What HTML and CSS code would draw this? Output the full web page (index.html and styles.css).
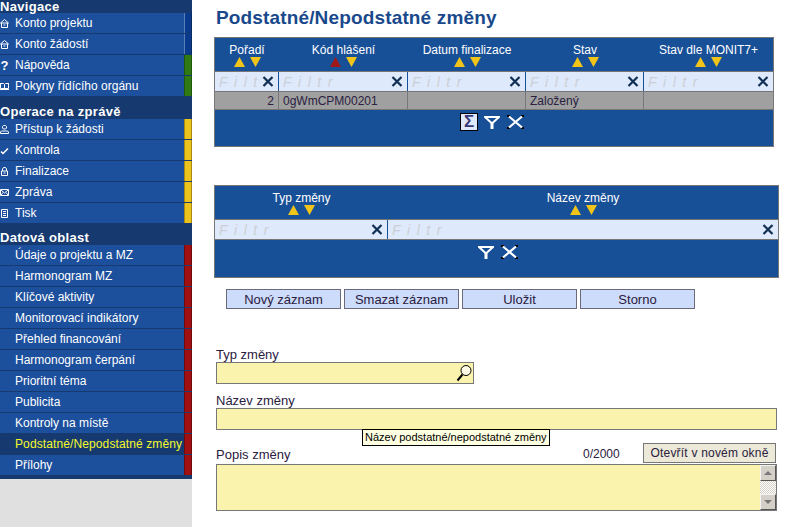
FILE: index.html
```html
<!DOCTYPE html>
<html lang="cs">
<head>
<meta charset="UTF-8">
<title>Podstatné/Nepodstatné změny</title>
<link rel="stylesheet" href="styles.css">
</head>
<body>
<svg class="defs" width="0" height="0">
  <defs>
    <symbol id="i-x" viewBox="0 0 11 11"><path d="M1 1l9 9M10 1l-9 9" fill="none" stroke="currentColor" stroke-width="2.2"/></symbol>
    <symbol id="i-close" viewBox="0 0 17 14" preserveAspectRatio="none"><path d="M0 0h3v2H0zM14 0h3v2h-3zM0 12h3v2H0zM14 12h3v2h-3z" fill="#000"/><path d="M2 1.500l13 11M15 1.500l-13 11" fill="none" stroke="#fff" stroke-width="2.200"/></symbol>
    <symbol id="i-up" viewBox="0 0 11 10"><path d="M5.5 0L11 10H0z" fill="currentColor"/></symbol>
    <symbol id="i-down" viewBox="0 0 11 10"><path d="M0 0H11L5.5 10z" fill="currentColor"/></symbol>
    <symbol id="i-funnel" viewBox="0 0 16 13"><path d="M1 1h14L8 7.500z" fill="none" stroke="#fff" stroke-width="2"/><path d="M6.500 7h3v6h-3z" fill="#fff"/></symbol>
    <symbol id="i-home" viewBox="0 0 9 9"><path d="M4.5 .5L8.5 4H.5zM1.5 4v4.500h6V4M3.5 6h2" fill="none" stroke="#fff"/></symbol>
  </defs>
</svg>
<div class="page">
  <nav class="side">
    <div class="side-nav">
      <h3 class="side-head">Navigace</h3>
      <a class="side-item"><svg class="ico"><use href="#i-home"/></svg>Konto projektu<i class="mark blue"></i></a>
      <a class="side-item"><svg class="ico"><use href="#i-home"/></svg>Konto žádostí<i class="mark blue"></i></a>
      <a class="side-item"><span class="ico ico-q">?</span>Nápověda<i class="mark green"></i></a>
      <a class="side-item"><svg class="ico" viewBox="0 0 9 9"><path d="M0 1.500h3.500l1 1 1-1H9M.5 1.500v5h8v-5M4.500 2.500v4M0 7.500h9" fill="none" stroke="#fff"/></svg>Pokyny řídícího orgánu<i class="mark green"></i></a>
      <h3 class="side-head tall">Operace na zprávě</h3>
      <a class="side-item"><svg class="ico" viewBox="0 0 9 9"><path d="M2.500 3V1.500l1-1h2l1 1V3l-1 1h-2zM.5 8.500V7l1-1h6l1 1v1.500z" fill="none" stroke="#fff"/></svg>Přístup k žádosti<i class="mark yellow"></i></a>
      <a class="side-item"><svg class="ico" viewBox="0 0 9 9"><path d="M1 5.500l2 2 5-5" fill="none" stroke="#fff" stroke-width="1.500"/></svg>Kontrola<i class="mark yellow"></i></a>
      <a class="side-item"><svg class="ico" viewBox="0 0 9 9"><path d="M2.500 4V2l1-1.500h2l1 1.500v2M1.500 4h6v4.500h-6zM3.500 6h2" fill="none" stroke="#fff"/></svg>Finalizace<i class="mark yellow"></i></a>
      <a class="side-item"><svg class="ico" viewBox="0 0 9 9"><path d="M.5 1.500h8v6h-8zM1 2l3.500 3L8 2M1 7l2-2.500M8 7L6 4.500" fill="none" stroke="#fff"/></svg>Zpráva<i class="mark yellow"></i></a>
      <a class="side-item"><svg class="ico" viewBox="0 0 9 9"><path d="M1.500 .5h6v8h-6zM3 2.500h3M3 4.500h3M3 6.500h3" fill="none" stroke="#fff"/></svg>Tisk<i class="mark yellow"></i></a>
      <h3 class="side-head">Datová oblast</h3>
      <a class="side-item"><span class="ico"></span>Údaje o projektu a MZ<i class="mark red"></i></a>
      <a class="side-item"><span class="ico"></span>Harmonogram MZ<i class="mark red"></i></a>
      <a class="side-item"><span class="ico"></span>Klíčové aktivity<i class="mark red"></i></a>
      <a class="side-item"><span class="ico"></span>Monitorovací indikátory<i class="mark red"></i></a>
      <a class="side-item"><span class="ico"></span>Přehled financování<i class="mark red"></i></a>
      <a class="side-item"><span class="ico"></span>Harmonogram čerpání<i class="mark red"></i></a>
      <a class="side-item"><span class="ico"></span>Prioritní téma<i class="mark red"></i></a>
      <a class="side-item"><span class="ico"></span>Publicita<i class="mark red"></i></a>
      <a class="side-item"><span class="ico"></span>Kontroly na místě<i class="mark red"></i></a>
      <a class="side-item active"><span class="ico"></span>Podstatné/Nepodstatné změny<i class="mark red"></i></a>
      <a class="side-item"><span class="ico"></span>Přílohy<i class="mark red"></i></a>
    </div>
  </nav>

  <main class="main">
    <h1 class="title">Podstatné/Nepodstatné změny</h1>

    <div class="grid grid-one">
      <div class="row row-head">
        <div class="hcell">Pořadí<div class="sort"><svg><use href="#i-up"/></svg><svg><use href="#i-down"/></svg></div></div>
        <div class="hcell">Kód hlášení<div class="sort"><svg class="sort-on"><use href="#i-up"/></svg><svg><use href="#i-down"/></svg></div></div>
        <div class="hcell">Datum finalizace<div class="sort"><svg><use href="#i-up"/></svg><svg><use href="#i-down"/></svg></div></div>
        <div class="hcell">Stav<div class="sort"><svg><use href="#i-up"/></svg><svg><use href="#i-down"/></svg></div></div>
        <div class="hcell">Stav dle MONIT7+<div class="sort"><svg><use href="#i-up"/></svg><svg><use href="#i-down"/></svg></div></div>
      </div>
      <div class="row row-filter">
        <div class="fcell"><span class="ph">Filtr</span><svg class="fx"><use href="#i-x"/></svg></div>
        <div class="fcell"><span class="ph">Filtr</span><svg class="fx"><use href="#i-x"/></svg></div>
        <div class="fcell"><span class="ph">Filtr</span><svg class="fx"><use href="#i-x"/></svg></div>
        <div class="fcell"><span class="ph">Filtr</span><svg class="fx"><use href="#i-x"/></svg></div>
        <div class="fcell"><span class="ph">Filtr</span><svg class="fx"><use href="#i-x"/></svg></div>
      </div>
      <div class="row row-data">
        <div class="dcell num">2</div>
        <div class="dcell">0gWmCPM00201</div>
        <div class="dcell"></div>
        <div class="dcell">Založený</div>
        <div class="dcell"></div>
      </div>
      <div class="grid-foot">
        <span class="sigma">Σ</span>
        <svg class="tool"><use href="#i-funnel"/></svg>
        <svg class="tool-x"><use href="#i-close"/></svg>
      </div>
    </div>

    <div class="grid grid-two">
      <div class="row row-head">
        <div class="hcell">Typ změny<div class="sort"><svg><use href="#i-up"/></svg><svg><use href="#i-down"/></svg></div></div>
        <div class="hcell">Název změny<div class="sort"><svg><use href="#i-up"/></svg><svg><use href="#i-down"/></svg></div></div>
      </div>
      <div class="row row-filter">
        <div class="fcell"><span class="ph">Filtr</span><svg class="fx"><use href="#i-x"/></svg></div>
        <div class="fcell"><span class="ph">Filtr</span><svg class="fx"><use href="#i-x"/></svg></div>
      </div>
      <div class="grid-foot">
        <svg class="tool"><use href="#i-funnel"/></svg>
        <svg class="tool-x"><use href="#i-close"/></svg>
      </div>
    </div>

    <div class="actions">
      <button class="btn">Nový záznam</button>
      <button class="btn">Smazat záznam</button>
      <button class="btn">Uložit</button>
      <button class="btn">Storno</button>
    </div>

    <form class="form">
      <label class="lbl">Typ změny</label>
      <div class="field field-short">
        <svg class="lens" viewBox="0 0 16 18"><circle cx="10" cy="6.500" r="5" fill="#fdfbe6" stroke="#000"/><path d="M6.500 10.500L1.500 16.500" stroke="#000" stroke-width="2"/></svg>
      </div>
      <label class="lbl lbl-gap">Název změny</label>
      <div class="field field-wide">
        <div class="tip">Název podstatné/nepodstatné změny</div>
      </div>
      <div class="popis-row">
        <label class="lbl">Popis změny</label>
        <span class="count">0/2000</span>
        <button type="button" class="btn-open">Otevřít v novém okně</button>
      </div>
      <div class="area">
        <div class="scroll">
          <span class="sbtn"><i class="arr arr-up"></i></span>
          <span class="strack"></span>
          <span class="sbtn"><i class="arr arr-down"></i></span>
        </div>
      </div>
    </form>
  </main>
</div>
</body>
</html>
```
FILE: styles.css
```css
html, body {
    margin: 0;
    padding: 0;
    background: white;
}

body {
    font-family: "Liberation Sans", Arial, sans-serif;
    font-size: 12px;
    color: #2a2040;
    height: 527px;
    overflow: hidden;
}

.defs {
    display: block;
    height: 0;
}

.page {
    display: flex;
    height: 527px;
}

/* left menu */
.side {
    width: 192px;
    flex: none;
    background: #e0e0e0;
}

.side-nav {
    background: #163a70;
    padding-bottom: 3px;
}

.side-head {
    margin: 0;
    height: 13px;
    line-height: 14px;
    font-size: 13px;
    letter-spacing: .3px;
    font-weight: bold;
    color: white;
}

.side-head.tall {
    height: 22px;
    line-height: 29px;
}

.side-item + .side-head:not(.tall) {
    height: 21px;
    line-height: 28px;
}

.side-item {
    display: flex;
    align-items: center;
    box-sizing: border-box;
    height: 21px;
    border-bottom: 1px solid #163a70;
    background: #1c4f9c;
    color: white;
    white-space: nowrap;
}

.side-item.active {
    background: #163a70;
    color: #f4f82a;
    letter-spacing: .11px;
}

.mark {
    margin-left: auto;
    flex: none;
    align-self: stretch;
    box-sizing: border-box;
    width: 8px;
    border-left: 1px solid;
    border-right: 1px solid;
}

.mark.blue { background: #0a3a8c; border-color: #5a7fb8 #0a2a60 #0a2a60 #5a7fb8; }
.mark.green { background: #2f7a12; border-color: #6a9a50 #1f5a0c; }
.mark.yellow { background: #ecc21c; border-color: #c8b868 #a88a10; }
.mark.red { background: #a01010; border-color: #c06868 #700a0a; }

.ico {
    width: 9px;
    height: 9px;
    flex: none;
    margin-right: 6px;
    display: block;
}

.ico-q {
    font-weight: bold;
    font-size: 13px;
    line-height: 9px;
    text-align: center;
}

/* main column */
.main {
    flex: 1;
    min-width: 0;
    padding: 0 0 0 22px;
}

.title {
    margin: 0 0 0 2px;
    height: 37px;
    line-height: 35px;
    font-size: 19px;
    font-weight: bold;
    letter-spacing: .15px;
    color: #19498c;
}

.grid {
    box-sizing: border-box;
    border: 1px solid #777;
    background: #185098;
}

.grid-one {
    width: 560px;
    height: 110px;
}

.grid-two {
    width: 565px;
    height: 93px;
    margin-top: 38px;
}

.row {
    display: grid;
}

.grid-one .row {
    grid-template-columns: 64px 129px 118px 118px 129px;
}

.grid-two .row {
    grid-template-columns: 173px 390px;
}

.row-head {
    height: 33px;
}

.hcell {
    text-align: center;
    color: white;
    padding-top: 6px;
    line-height: 13px;
}

.sort {
    display: flex;
    justify-content: center;
    gap: 5px;
    height: 10px;
}

.sort svg {
    width: 11px;
    height: 10px;
    color: #f0c419;
}

.sort svg.sort-on {
    color: #a01818;
}

.row-filter {
    height: 21px;
    box-sizing: border-box;
    background: #dfe9fc;
    border-top: 1px solid #777;
    border-bottom: 1px solid #777;
}

.fcell {
    display: flex;
    align-items: center;
    overflow: hidden;
    border-right: 1px solid #185098;
    padding: 0 4px;
    position: relative;
}

.fcell:last-child {
    border-right: 0;
}

.ph {
    font-style: italic;
    font-size: 14px;
    letter-spacing: 6.500px;
    color: #ccd0d6;
}

.fx {
    width: 12px;
    height: 11px;
    flex: none;
    color: #0f2f55;
    position: absolute;
    right: 4px;
    top: 4px;
}

.row-data {
    height: 18px;
    background: #a0a0a0;
    border-bottom: 1px solid #777;
    box-sizing: border-box;
}

.dcell {
    padding: 0 4px;
    line-height: 18px;
    border-right: 1px solid #777;
}

.dcell:last-child {
    border-right: 0;
}

.dcell.num {
    text-align: right;
}

.grid-foot {
    display: flex;
    justify-content: center;
    align-items: flex-start;
    gap: 6px;
    padding: 3px 4px 0 0;
}

.grid-two .grid-foot {
    padding: 3px 0 0 2px;
}

.sigma {
    box-sizing: border-box;
    width: 18px;
    height: 18px;
    background: #dfe9fc;
    border: 1px solid #000;
    color: #3a3a78;
    font-weight: bold;
    font-size: 17px;
    line-height: 16px;
    text-align: center;
}

.tool {
    width: 16px;
    height: 13px;
    margin-top: 3px;
}

.tool-x {
    width: 17px;
    height: 14px;
    margin: 2px 0 0 1px;
}

.actions {
    display: flex;
    gap: 3px;
    margin: 11px 0 0 12px;
}

.btn {
    box-sizing: border-box;
    width: 115px;
    height: 20px;
    padding: 0;
    border: 1px solid #6a6a7a;
    background: #cddcfb;
    font: 13px "Liberation Sans", Arial, sans-serif;
    color: #2a2040;
}

.form {
    padding-left: 2px;
    margin-top: 39px;
}

.lbl {
    display: block;
    height: 14px;
    line-height: 13px;
    font-size: 13px;
}

.lbl-gap {
    margin-top: 10px;
}

.field {
    box-sizing: border-box;
    height: 22px;
    border: 1px solid #777;
    background: #faf3ad;
    position: relative;
}

.field-short {
    width: 258px;
    display: flex;
    justify-content: flex-end;
    align-items: center;
    padding-right: 1px;
}

.field-wide {
    width: 561px;
}

.lens {
    width: 16px;
    height: 18px;
}

.tip {
    position: absolute;
    left: 145px;
    top: 20px;
    z-index: 2;
    box-sizing: border-box;
    width: 188px;
    height: 17px;
    border: 1px solid #000;
    background: #ffffe1;
    color: #000;
    font-size: 11px;
    line-height: 15px;
    padding-left: 2px;
    white-space: nowrap;
}

.popis-row {
    display: flex;
    align-items: flex-end;
    height: 34px;
}

.popis-row .lbl {
    width: 367px;
    margin-bottom: 2px;
}

.count {
    width: 60px;
    line-height: 13px;
    margin-bottom: 3px;
}

.btn-open {
    box-sizing: border-box;
    width: 133px;
    height: 20px;
    padding: 0;
    margin-bottom: 1px;
    border: 1px solid #777;
    background: #ece9d8;
    font: 12px "Liberation Sans", Arial, sans-serif;
    letter-spacing: .2px;
    color: #2a2040;
}

.area {
    box-sizing: border-box;
    width: 561px;
    height: 47px;
    border: 1px solid #777;
    background: #faf3ad;
    display: flex;
    justify-content: flex-end;
}

.scroll {
    width: 16px;
    display: flex;
    flex-direction: column;
}

.sbtn {
    height: 16px;
    box-sizing: border-box;
    background: #d4d0c8;
    border: 1px solid;
    border-color: #f4f4f4 #555 #555 #f4f4f4;
    display: flex;
    align-items: center;
    justify-content: center;
}

.strack {
    flex: 1;
    background: repeating-conic-gradient(#d4d0c8 0 25%, #fff 0 50%) 0 0 / 2px 2px;
}

.arr {
    width: 0;
    height: 0;
    border-left: 4px solid transparent;
    border-right: 4px solid transparent;
}

.arr-up {
    border-bottom: 4px solid #777;
}

.arr-down {
    border-top: 4px solid #777;
}
```
